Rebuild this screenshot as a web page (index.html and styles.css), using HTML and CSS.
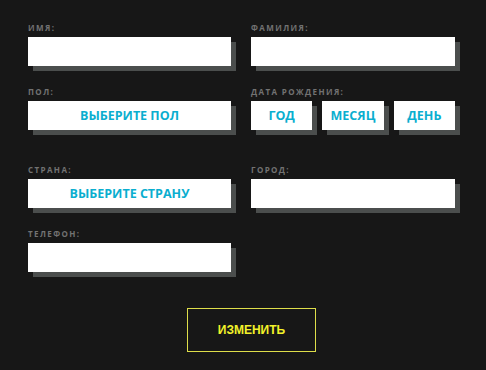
FILE: index.html
```html
<!DOCTYPE html>
<html>
<head>
<meta charset="utf-8">
<link rel="stylesheet" href="styles.css">
</head>
<body>
<form class="form">
  <div class="grid">
    <div class="field">
      <div class="label">Имя:</div>
      <div class="box"></div>
    </div>
    <div class="field">
      <div class="label">Фамилия:</div>
      <div class="box"></div>
    </div>
    <div class="field">
      <div class="label">Пол:</div>
      <div class="box select">Выберите пол</div>
    </div>
    <div class="field">
      <div class="label">Дата рождения:</div>
      <div class="date-row">
        <div class="box select">Год</div>
        <div class="box select">Месяц</div>
        <div class="box select">День</div>
      </div>
    </div>
    <div class="field spaced">
      <div class="label">Страна:</div>
      <div class="box select">Выберите страну</div>
    </div>
    <div class="field spaced">
      <div class="label">Город:</div>
      <div class="box"></div>
    </div>
    <div class="field">
      <div class="label">Телефон:</div>
      <div class="box"></div>
    </div>
  </div>
  <div class="actions">
    <div class="submit">ИЗМЕНИТЬ</div>
  </div>
</form>
</body>
</html>
```
FILE: styles.css
```css
html, body {
  margin: 0;
  padding: 0;
  background: #171717;
}
.form {
  padding: 22px 0 0 28px;
}
.grid {
  display: grid;
  grid-template-columns: 203px 204px;
  column-gap: 20px;
  row-gap: 20px;
}
.field {
  display: flex;
  flex-direction: column;
}
.field.spaced {
  margin-top: 14px;
}
.label {
  font-family: "Open Sans", sans-serif;
  font-weight: 700;
  font-size: 8px;
  line-height: 12px;
  height: 12px;
  margin-bottom: 3px;
  letter-spacing: 1.4px;
  text-transform: uppercase;
  color: #727272;
}
.box {
  height: 29px;
  background: #fff;
  box-shadow: 5px 5px 0 #4b4e4d;
}
.select {
  display: flex;
  align-items: center;
  justify-content: center;
  font-family: "Open Sans", sans-serif;
  font-weight: 700;
  font-size: 12.5px;
  color: #0aaecf;
  text-transform: uppercase;
}
.date-row {
  display: flex;
  gap: 10px;
}
.date-row .box {
  flex: 1;
}
.actions {
  padding: 36px 0 0 159px;
}
.submit {
  width: 127px;
  height: 42px;
  border: 1px solid #dede4a;
  display: flex;
  align-items: center;
  justify-content: center;
  font-family: "Liberation Sans", Arial, sans-serif;
  font-weight: 700;
  font-size: 12px;
  color: #f2f22a;
}
```
